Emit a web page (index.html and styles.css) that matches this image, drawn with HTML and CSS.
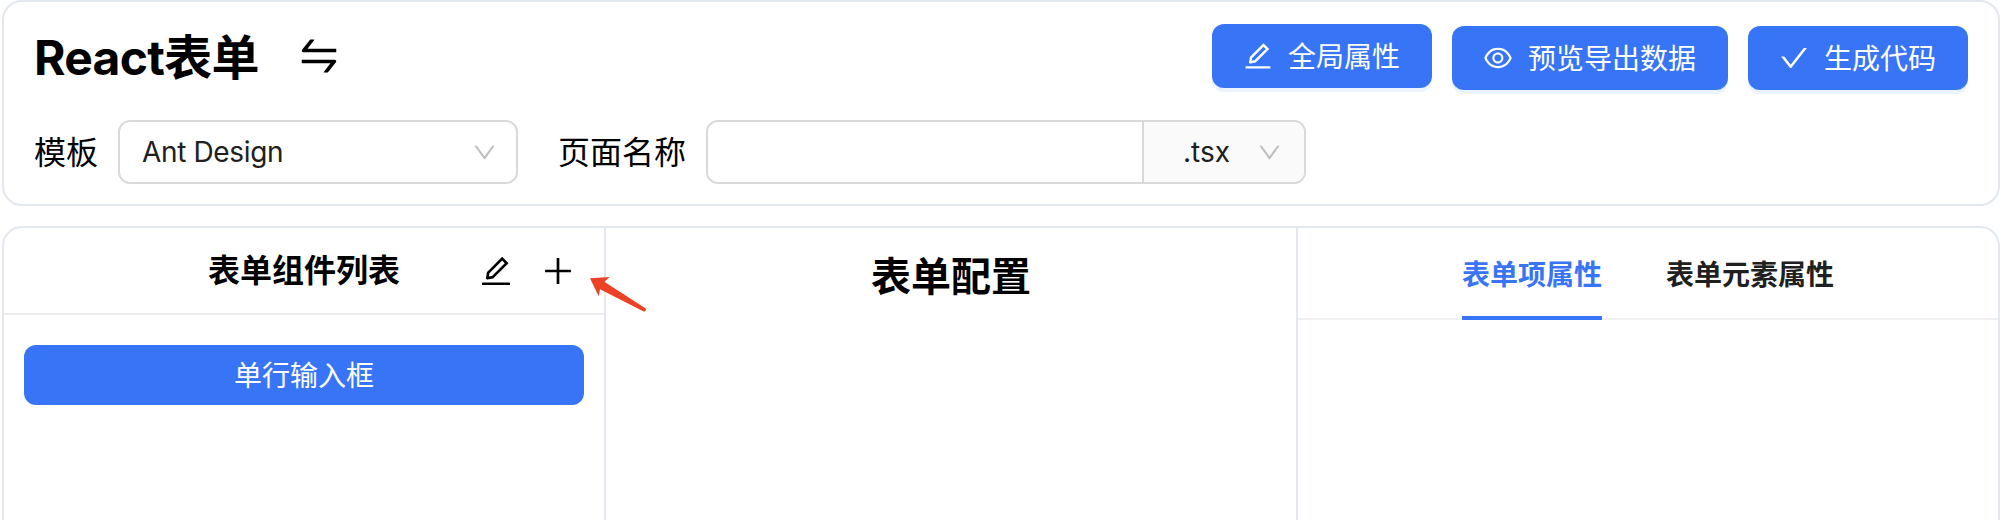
FILE: index.html
```html
<!DOCTYPE html>
<html lang="zh-CN">
<head>
<meta charset="utf-8">
<title>React表单</title>
<link rel="stylesheet" href="styles.css">
</head>
<body>
<svg class="sprite" aria-hidden="true">
  <symbol id="edit" viewBox="0 0 1024 1024"><path d="M257.7 752c2 0 4-.2 6-.5L431.9 722c2-.4 3.9-1.3 5.3-2.8l423.9-423.9a9.96 9.96 0 000-14.1L694.9 114.9c-1.9-1.9-4.4-2.9-7.1-2.9s-5.2 1-7.1 2.9L256.8 538.8c-1.5 1.5-2.4 3.3-2.8 5.3l-29.5 168.2a33.5 33.5 0 009.4 29.8c6.6 6.4 14.9 9.9 23.8 9.9zm67.4-174.4L687.8 215l73.3 73.3-362.7 362.6-88.9 15.7 15.6-89zM880 836H144c-17.7 0-32 14.3-32 32v36c0 4.4 3.6 8 8 8h784c4.4 0 8-3.6 8-8v-36c0-17.7-14.3-32-32-32z"/></symbol>
  <symbol id="eye" viewBox="0 0 1024 1024"><path d="M942.2 486.2C847.4 286.5 704.1 186 512 186c-192.2 0-335.4 100.5-430.2 300.3a60.3 60.3 0 000 51.5C176.6 737.5 319.9 838 512 838c192.2 0 335.4-100.5 430.2-300.3 7.7-16.2 7.7-35 0-51.5zM512 766c-161.3 0-279.4-81.8-362.7-254C232.6 339.8 350.7 258 512 258c161.3 0 279.4 81.8 362.7 254C791.5 684.2 673.4 766 512 766zm-4-430c-97.2 0-176 78.8-176 176s78.8 176 176 176 176-78.8 176-176-78.8-176-176-176zm0 288c-61.9 0-112-50.1-112-112s50.1-112 112-112 112 50.1 112 112-50.1 112-112 112z"/></symbol>
  <symbol id="check" viewBox="0 0 1024 1024"><path d="M912 190h-69.9c-9.8 0-19.1 4.5-25.1 12.2L404.7 724.5 207 474a32 32 0 00-25.1-12.2H112c-6.7 0-10.4 7.7-6.3 12.9l273.9 347c12.8 16.2 37.4 16.2 50.3 0l488.4-618.9c4.1-5.1.4-12.8-6.3-12.8z"/></symbol>
  <symbol id="swap" viewBox="0 0 1024 1024"><path d="M847.9 592H152c-4.4 0-8 3.6-8 8v60c0 4.4 3.6 8 8 8h605.2L612.9 851c-4.1 5.2-.4 13 6.3 13h72.5c4.9 0 9.5-2.2 12.6-6.1l168.8-214.1c16.5-21 1.6-51.8-25.2-51.8zM872 356H266.8l144.3-183c4.1-5.2.4-13-6.3-13h-72.5c-4.9 0-9.5 2.2-12.6 6.1L150.9 380.2c-16.5 21-1.6 51.8 25.1 51.8h696c4.4 0 8-3.6 8-8v-60c0-4.4-3.6-8-8-8z"/></symbol>
  <symbol id="down" viewBox="0 0 1024 1024"><path d="M884 256h-75c-5.1 0-9.9 2.5-12.9 6.6L512 654.2 227.9 262.6c-3-4.1-7.8-6.6-12.9-6.6h-75c-6.5 0-10.3 7.4-6.5 12.7l352.6 486.1c12.8 17.6 39 17.6 51.7 0l352.6-486.1c3.9-5.3.1-12.7-6.4-12.7z"/></symbol>
  <symbol id="plus" viewBox="0 0 1024 1024"><path d="M482 144h60q8 0 8 8v720q0 8-8 8h-60q-8 0-8-8V152q0-8 8-8z"/><path d="M152 474h720q8 0 8 8v60q0 8-8 8H152q-8 0-8-8v-60q0-8 8-8z"/></symbol>
</svg>

<header class="panel toolbar">
  <div class="toolbar-top">
    <h1 class="title">React表单</h1>
    <svg class="icon-swap"><use href="#swap"/></svg>
    <div class="actions">
      <button class="btn btn-raised"><svg class="btn-icon"><use href="#edit"/></svg><span class="btn-text">全局属性</span></button>
      <button class="btn"><svg class="btn-icon"><use href="#eye"/></svg><span class="btn-text">预览导出数据</span></button>
      <button class="btn"><svg class="btn-icon"><use href="#check"/></svg><span class="btn-text">生成代码</span></button>
    </div>
  </div>
  <div class="fields">
    <span class="label">模板</span>
    <div class="select"><span class="select-value">Ant Design</span><svg class="icon-down"><use href="#down"/></svg></div>
    <span class="label label-name">页面名称</span>
    <div class="input-group">
      <input class="input" type="text" aria-label="页面名称">
      <div class="addon"><span class="addon-value">.tsx</span><svg class="icon-down"><use href="#down"/></svg></div>
    </div>
  </div>
</header>

<main class="panel workspace">
  <section class="column">
    <div class="list-head">
      <h2 class="list-title">表单组件列表</h2>
      <div class="list-tools">
        <svg class="tool-icon"><use href="#edit"/></svg>
        <svg class="tool-icon"><use href="#plus"/></svg>
      </div>
      <svg class="pointer" viewBox="0 0 60 40"><path d="M2 5.3L21.7 4l-5.4 4.7L57 35a1.8 1.8 0 01-1.8 3.2L12 16.3l-1.3 7z"/></svg>
    </div>
    <div class="list"><div class="list-item">单行输入框</div></div>
  </section>
  <section class="column">
    <h2 class="config-title">表单配置</h2>
  </section>
  <section class="column">
    <nav class="tabs">
      <span class="tab tab-active">表单项属性</span>
      <span class="tab">表单元素属性</span>
    </nav>
  </section>
</main>
</body>
</html>
```

FILE: styles.css
```css
* {
  box-sizing: border-box;
}

body {
  margin: 0;
  padding: 0 14px 0 2px;
  height: 520px;
  overflow: hidden;
  background: #fff;
  color: #000;
  font-family: Inter, "Noto Sans CJK SC", sans-serif;
  font-size: 28px;
}

h1,
h2 {
  margin: 0;
}

svg {
  display: block;
  flex: none;
  fill: currentColor;
}

.sprite {
  display: none;
}

.panel {
  border: 2px solid #e2e8ee;
  border-radius: 20px;
}

.toolbar {
  height: 206px;
  padding: 22px 30px 0;
}

.toolbar-top {
  display: flex;
  height: 66px;
}

.title {
  width: 223px;
  margin-right: 38px;
  font-size: 48px;
  font-weight: 700;
  line-height: 68px;
  letter-spacing: -0.7px;
  white-space: nowrap;
}

.icon-swap {
  width: 48px;
  height: 48px;
  margin-top: 8px;
}

.actions {
  display: flex;
  align-items: flex-end;
  gap: 20px;
  margin-left: auto;
}

.btn {
  display: flex;
  align-items: center;
  gap: 14px;
  height: 64px;
  padding: 0 32px 0 30px;
  border: 0;
  border-radius: 12px;
  background: #3875f6;
  box-shadow: 0 4px 0 #ebf3fe;
  color: #fff;
  font: inherit;
  white-space: nowrap;
}

.btn-raised {
  align-self: flex-start;
}

.btn-icon {
  width: 32px;
  height: 32px;
}

.btn-text {
  padding-bottom: 2px;
}

.fields {
  display: flex;
  align-items: center;
  height: 64px;
  margin-top: 30px;
}

.label {
  width: 64px;
  margin-right: 20px;
  padding-top: 2px;
  font-size: 32px;
  line-height: 64px;
  white-space: nowrap;
}

.label-name {
  width: 128px;
  margin-left: 40px;
}

.select {
  display: flex;
  align-items: center;
  justify-content: space-between;
  width: 400px;
  height: 64px;
  padding: 0 18px 0 22px;
  border: 2px solid #d9d9d9;
  border-radius: 12px;
  color: #202020;
}

.select-value {
  letter-spacing: -0.35px;
}

.icon-down {
  width: 27px;
  height: 27px;
  color: #bfbfbf;
}

.input-group {
  display: flex;
  width: 600px;
  height: 64px;
  border: 2px solid #d9d9d9;
  border-radius: 12px;
  overflow: hidden;
}

.input {
  flex: 1;
  min-width: 0;
  border: 0;
  outline: 0;
  background: #fff;
  font: inherit;
}

.addon {
  display: flex;
  align-items: center;
  justify-content: space-between;
  width: 162px;
  padding: 0 21px 0 39px;
  border-left: 2px solid #d9d9d9;
  background: #fafafa;
  color: #202020;
}

.workspace {
  display: grid;
  grid-template-columns: 602px 692px 1fr;
  height: 294px;
  margin-top: 20px;
  border-bottom: 0;
  border-bottom-left-radius: 0;
  border-bottom-right-radius: 0;
}

.column {
  border-right: 2px solid #e2e8ee;
}

.column:last-child {
  border-right: 0;
}

.list-head {
  position: relative;
  display: flex;
  align-items: center;
  justify-content: flex-end;
  height: 87px;
  padding: 0 28px 0 0;
  border-bottom: 2px solid #eeeeee;
}

.list-title {
  margin-right: 78px;
  font-size: 32px;
  font-weight: 600;
  line-height: 84px;
}

.list-tools {
  display: flex;
  gap: 26px;
}

.tool-icon {
  width: 36px;
  height: 36px;
}

/* Callout arrow drawn across the column border */
.pointer {
  position: absolute;
  top: 45px;
  left: 584px;
  z-index: 1;
  width: 60px;
  height: 40px;
  fill: #ed4126;
}

.list {
  padding: 30px 20px;
}

.list-item {
  height: 60px;
  border-radius: 12px;
  background: #3875f6;
  color: #fff;
  line-height: 62px;
  text-align: center;
}

.config-title {
  font-size: 40px;
  font-weight: 700;
  line-height: 98px;
  text-align: center;
}

.tabs {
  display: flex;
  justify-content: center;
  gap: 64px;
  height: 92px;
  border-bottom: 2px solid #f0f0f0;
}

.tab {
  height: 92px;
  color: #202020;
  font-weight: 700;
  line-height: 94px;
}

.tab-active {
  border-bottom: 4px solid #3875f6;
  color: #3875f6;
}
```
